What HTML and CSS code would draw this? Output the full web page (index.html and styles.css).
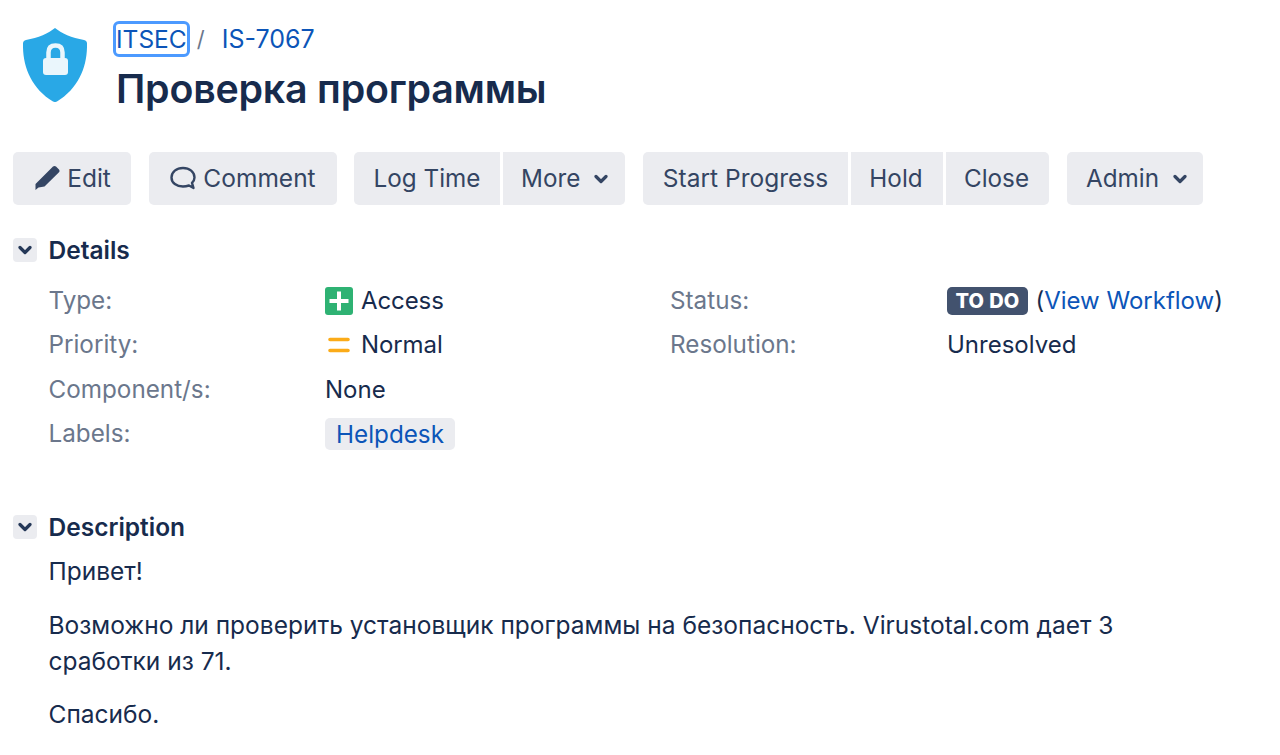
FILE: index.html
```html
<!DOCTYPE html>
<html lang="ru">
<head>
<meta charset="utf-8">
<title>IS-7067</title>
<link rel="stylesheet" href="styles.css">
</head>
<body>
<header class="issue-header">
  <svg class="project-icon" viewBox="0 0 64 74" width="64" height="74" aria-hidden="true">
    <path d="M32 0 C38 5 49 10 61 12 C63 12.400 64 13.500 64 15.500 C64.500 38 56 60 34 73.500 C32.800 74.200 31.200 74.200 30 73.500 C8 60 -.5 38 0 15.500 C0 13.500 1 12.400 3 12 C15 10 26 5 32 0 Z" fill="#29a8e6"/>
    <path d="M25.500 32 V24.500 C25.500 20 28 17.500 32.500 17.500 C37 17.500 39.500 20 39.500 24.500 V32" fill="none" stroke="#eaf6fc" stroke-width="4.500"/>
    <rect x="20" y="30" width="25" height="17" rx="3" fill="#eaf6fc"/>
  </svg>
  <div class="header-text">
    <nav class="breadcrumbs">
      <a class="crumb crumb-focus" href="#">ITSEC</a>
      <span class="sep">/</span>
      <a class="crumb" href="#">IS-7067</a>
    </nav>
    <h1 class="title">Проверка программы</h1>
  </div>
</header>

<div class="toolbar">
  <div class="group">
    <a class="btn btn-edit" href="#">
      <svg class="ico-edit" viewBox="0 0 26 26" width="26" height="26" aria-hidden="true"><path d="M19 1.500 C20 .8 21 .8 22 1.500 L25 4.500 C25.700 5.300 25.700 6.500 25 7.300 L10.500 21.500 L4.500 22.500 L1.500 25 L1.500 19 L4 16.500 Z" fill="#344563"/></svg>
      Edit
    </a>
  </div>
  <div class="group group-tight">
    <a class="btn btn-comment" href="#">
      <svg class="ico-comment" viewBox="0 0 26 24" width="26" height="24" aria-hidden="true"><path d="M13 2 C6.500 2 1.500 6 1.500 11.500 C1.500 17 6.500 20.500 13 20.500 C15.500 20.500 17.500 20 19 19.500 L23.500 22 L22 16.800 C23.700 15.300 24.500 13.500 24.500 11.500 C24.500 6 19.500 2 13 2 Z" fill="none" stroke="#344563" stroke-width="2.400" stroke-linejoin="round"/></svg>
      Comment
    </a>
  </div>
  <div class="group">
    <a class="btn btn-log" href="#">Log Time</a>
    <a class="btn btn-more" href="#">More<svg class="chev" viewBox="0 0 14 10" width="14" height="10" aria-hidden="true"><path d="M2 2.500 L7 7.500 L12 2.500" fill="none" stroke="#344563" stroke-width="3.200" stroke-linecap="round" stroke-linejoin="round"/></svg></a>
  </div>
  <div class="group">
    <a class="btn btn-start" href="#">Start Progress</a>
    <a class="btn btn-hold" href="#">Hold</a>
    <a class="btn btn-close" href="#">Close</a>
  </div>
  <div class="group">
    <a class="btn btn-admin" href="#">Admin<svg class="chev" viewBox="0 0 14 10" width="14" height="10" aria-hidden="true"><path d="M2 2.500 L7 7.500 L12 2.500" fill="none" stroke="#344563" stroke-width="3.200" stroke-linecap="round" stroke-linejoin="round"/></svg></a>
  </div>
</div>

<section class="module module-details">
  <h2 class="module-head">
    <span class="toggle"><svg viewBox="0 0 14 10" width="14" height="10" aria-hidden="true"><path d="M2 2.500 L7 7.500 L12 2.500" fill="none" stroke="#253858" stroke-width="3.200" stroke-linecap="round" stroke-linejoin="round"/></svg></span>
    Details
  </h2>
  <dl class="details">
    <dt>Type:</dt>
    <dd class="with-icon"><svg viewBox="0 0 28 28" width="28" height="28" aria-hidden="true"><rect width="28" height="28" rx="3" fill="#2eb273"/><path d="M14 4.500 V23.500 M4.500 14 H23.500" stroke="#fff" stroke-width="4"/></svg>Access</dd>
    <dt>Status:</dt>
    <dd><span class="lozenge">TO DO</span> (<a href="#">View Workflow</a>)</dd>
    <dt>Priority:</dt>
    <dd class="with-icon"><svg viewBox="0 0 28 28" width="28" height="28" aria-hidden="true"><path d="M5 8.500 H23 M5 19.500 H23" stroke="#fbab18" stroke-width="3.600" stroke-linecap="round"/></svg>Normal</dd>
    <dt>Resolution:</dt>
    <dd>Unresolved</dd>
    <dt>Component/s:</dt>
    <dd class="wide">None</dd>
    <dt>Labels:</dt>
    <dd class="wide"><a class="label" href="#">Helpdesk</a></dd>
  </dl>
</section>

<section class="module module-description">
  <h2 class="module-head">
    <span class="toggle"><svg viewBox="0 0 14 10" width="14" height="10" aria-hidden="true"><path d="M2 2.500 L7 7.500 L12 2.500" fill="none" stroke="#253858" stroke-width="3.200" stroke-linecap="round" stroke-linejoin="round"/></svg></span>
    Description
  </h2>
  <div class="description">
    <p>Привет!</p>
    <p>Возможно ли проверить установщик программы на безопасность. Virustotal.com дает 3 сработки из 71.</p>
    <p>Спасибо.</p>
  </div>
</section>
</body>
</html>
```

FILE: styles.css
```css
* { box-sizing: border-box; }
html, body { margin: 0; padding: 0; }
body {
  width: 1280px;
  height: 755px;
  overflow: hidden;
  background: #fff;
  color: #172b4d;
  font-family: Inter, "Noto Sans", sans-serif;
  font-size: 24px;
  line-height: 36px;
}
a { color: #0c55b8; text-decoration: none; }

.issue-header { display: flex; padding: 28px 0 0 23px; height: 152px; }
.project-icon { flex: none; margin-right: 29px; }
.header-text { display: flex; flex-direction: column; margin-top: -6px; }
.breadcrumbs { display: flex; align-items: center; height: 34px; font-size: 25px; }
.crumb { padding: 0 2px; }
.crumb-focus {
  display: block;
  height: 36px;
  line-height: 30px;
  margin-left: -3px;
  padding: 0;
  font-size: 24.500px;
  border: 3px solid #4c9aff;
  border-radius: 6px;
}
.sep { color: #6b778c; margin: 0 15px 0 7px; font-size: 22px; }
.title { margin: 10px 0 0; font-size: 39.300px; line-height: 46px; font-weight: 600; color: #172b4d; letter-spacing: -.2px; }

.toolbar { display: flex; padding-left: 13px; font-size: 24.250px; }
.group { display: flex; gap: 3px; margin-right: 18px; }
.group-tight { margin-right: 17px; }
.btn {
  display: flex;
  align-items: center;
  justify-content: center;
  height: 53px;
  background: #ebecf0;
  color: #344563;
  border-radius: 5px;
  white-space: nowrap;
}
.group .btn:not(:first-child) { border-top-left-radius: 0; border-bottom-left-radius: 0; }
.group .btn:not(:last-child) { border-top-right-radius: 0; border-bottom-right-radius: 0; }
.btn-edit { width: 118px; gap: 7px; padding: 0 0 1px 1px; font-size: 24.500px; }
.btn-comment { width: 188px; gap: 7px; padding-bottom: 1px; font-size: 24.500px; }
.btn-log { width: 146px; }
.btn-more { width: 122px; gap: 14px; justify-content: flex-start; padding-left: 18px; }
.btn-start { width: 205px; padding-bottom: 1px; font-size: 24.500px; }
.btn-hold { width: 92px; padding-right: 2px; }
.btn-close { width: 103px; padding-right: 2px; }
.btn-admin { width: 136px; gap: 14px; justify-content: flex-start; padding-left: 19px; }

.module { padding-left: 13px; }
.module-details { margin-top: 27px; }
.module-description { margin-top: 52.500px; }
.module-head {
  display: flex;
  align-items: center;
  gap: 11.500px;
  margin: 0;
  height: 36px;
  font-size: 24.500px;
  font-weight: 600;
  color: #172b4d;
}
.toggle {
  display: flex;
  align-items: center;
  justify-content: center;
  width: 24px;
  height: 24px;
  background: #ebecf0;
  border-radius: 4px;
}

.details {
  display: grid;
  grid-template-columns: 276.500px 345px 277px 1fr;
  grid-auto-rows: 44.500px;
  margin: 10.500px 0 0 35.500px;
  align-items: center;
}
.details dt { color: #6b778c; font-size: 24.250px; }
.details dd { margin: 0; display: flex; align-items: center; white-space: pre; }
.details dd.wide { grid-column: 2 / 5; }
.with-icon svg { margin-right: 8px; }
.with-icon { letter-spacing: -.1px; }
.lozenge {
  display: inline-block;
  background: #42526e;
  color: #fff;
  border-radius: 5px;
  height: 28px;
  line-height: 28px;
  padding: 0 8.500px;
  font-size: 20px;
  font-weight: 800;
  word-spacing: 1px;
  margin-right: 1px;
}
.label {
  display: block;
  height: 32px;
  line-height: 33px;
  padding: 0 11px;
  font-size: 24.250px;
  background: #ebecf0;
  border-radius: 5px;
}
.description { margin: 8px 0 0 35.500px; width: 1100px; font-size: 24.500px; }
.description p { margin: 0 0 17.500px; }
```
